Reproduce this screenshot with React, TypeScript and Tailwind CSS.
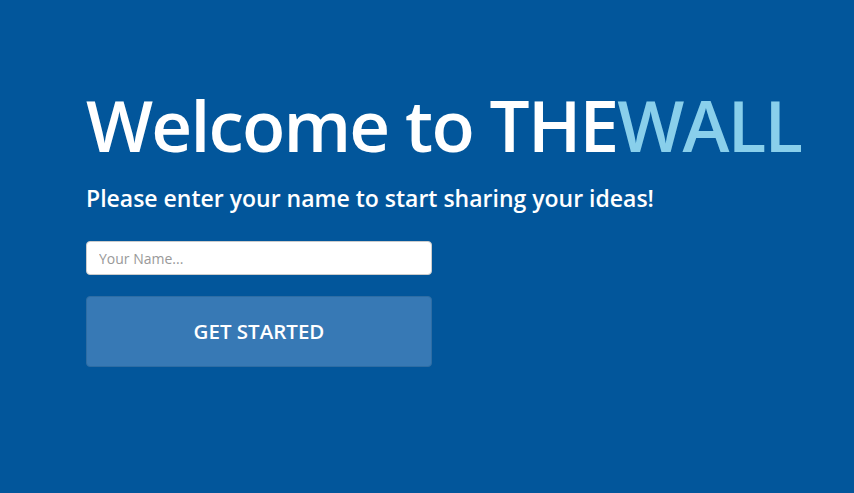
export default function App() {
  return (
    <div className="h-[493px] w-full bg-[#02569b] font-['Open_Sans',sans-serif] text-white">
      <div className="pl-[86px] pt-[80px]">
        <h1 className="whitespace-nowrap text-[71px] font-semibold leading-[90px] tracking-[-1.8px]">
          Welcome to THE<span className="text-[#89cfeb]">WALL</span>
        </h1>
        <p className="mt-[13px] whitespace-nowrap text-[23px] font-semibold leading-[30px]">
          Please enter your name to start sharing your ideas!
        </p>
        <div className="mt-[28px] flex w-[346px] flex-col gap-[21px]">
          <input
            type="text"
            placeholder="Your Name..."
            className="h-[34px] w-full rounded-[4px] border border-[#ccc] bg-white px-3 text-[14px] text-gray-700 placeholder:text-[#999] outline-none"
          />
          <button className="h-[71px] w-full rounded-[4px] border border-[#2e6da4] bg-[#3779b5] text-[20.5px] font-semibold text-white">
            GET STARTED
          </button>
        </div>
      </div>
    </div>
  )
}
